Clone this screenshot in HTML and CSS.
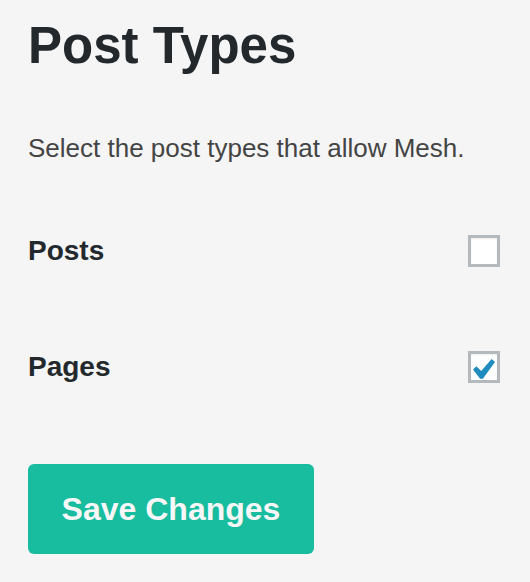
FILE: index.html
```html
<!DOCTYPE html>
<html>
<head>
<meta charset="utf-8">
<link rel="stylesheet" href="styles.css">
</head>
<body>
<div class="page">
  <h1 class="title">Post Types</h1>
  <p class="desc">Select the post types that allow Mesh.</p>
  <div class="rows">
    <div class="row">
      <span class="label">Posts</span>
      <span class="box"></span>
    </div>
    <div class="row">
      <span class="label">Pages</span>
      <span class="box checked">
        <svg width="22" height="20" viewBox="0 0 22 20"><path d="M0 10.4 L3.4 7.2 L8.2 11.9 L18.6 0 L22 2.9 L9.9 19.8 H7.1 Z" fill="#1e8cbe"/></svg>
      </span>
    </div>
  </div>
  <button class="save">Save Changes</button>
</div>
</body>
</html>
```
FILE: styles.css
```css
html, body {
  margin: 0;
  padding: 0;
  background: #f5f5f5;
}
body {
  font-family: "Liberation Sans", Arial, sans-serif;
}
.page {
  padding: 20px 30px 0 28px;
  display: flex;
  flex-direction: column;
}
.title {
  margin: 0;
  font-size: 51px;
  line-height: 51px;
  font-weight: bold;
  color: #23282d;
}
.desc {
  margin: 64px 0 0 0;
  font-size: 26px;
  line-height: 26px;
  color: #444;
}
.rows {
  margin-top: 74px;
  display: flex;
  flex-direction: column;
  gap: 84px;
}
.row {
  display: flex;
  justify-content: space-between;
  align-items: center;
  height: 32px;
}
.label {
  font-size: 28px;
  line-height: 28px;
  font-weight: bold;
  color: #23282d;
}
.box {
  box-sizing: border-box;
  width: 32px;
  height: 32px;
  border: 3px solid #b4b9be;
  background: #fff;
  box-shadow: inset 0 1px 2px rgba(0,0,0,0.07);
  display: flex;
  align-items: center;
  justify-content: center;
}
.box svg {
  margin-top: 3px;
}
.save {
  margin-top: 81px;
  align-self: flex-start;
  width: 286px;
  height: 90px;
  border: none;
  border-radius: 6px;
  background: #18bc9e;
  color: #f7f7f7;
  font-family: "Liberation Sans", Arial, sans-serif;
  font-size: 32px;
  line-height: 32px;
  font-weight: bold;
  padding: 0;
}
```
